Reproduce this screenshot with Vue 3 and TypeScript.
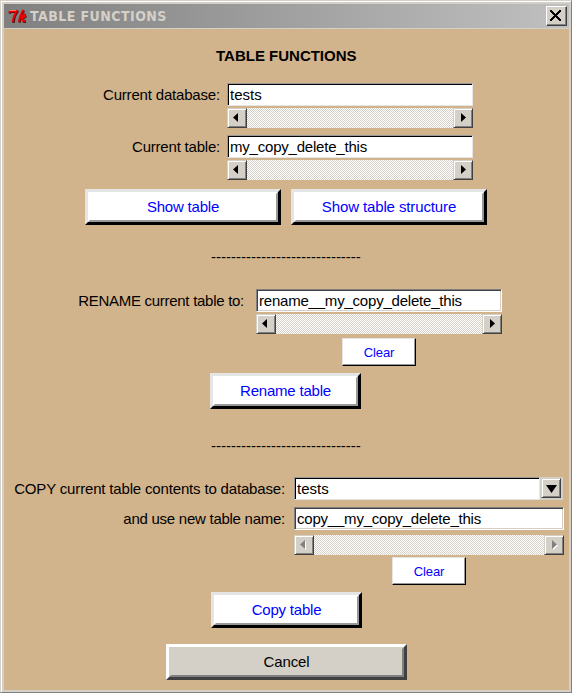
<script setup lang="ts">
import { ref } from 'vue'

const currentDatabase = ref('tests')
const currentTable = ref('my_copy_delete_this')
const renameTo = ref('rename__my_copy_delete_this')
const targetDatabase = ref('tests')
const copyName = ref('copy__my_copy_delete_this')
const dashes = '-'.repeat(30)
</script>

<template>
  <main class="window">
    <header class="titlebar">
      <svg class="logo" width="20" height="16" viewBox="0 0 20 16" fill="none" stroke-linejoin="round">
        <g stroke="#400c0c" stroke-width="2.4">
          <path d="M1.5 4.5L2.5 2.8H9.5Q6.5 6 5.4 13.8" />
          <path d="M16 1.5Q12.5 6 11.5 13.6M12.5 9.5L16.5 5.8L17.4 8L14.5 9.5L16 12.8H18" />
        </g>
        <g stroke="#f00000" stroke-width="2">
          <path d="M1 4L2 2.2H9Q6 5.5 4.6 13" />
          <path d="M15.5 1Q12 5.5 11 13M12 9L16 5.4L17 7.5L14 9L15.5 12.3H17.6" />
        </g>
        <path d="M1.5 1.5H8" stroke="#ff7070" stroke-width="1" />
      </svg>
      <span class="caption">TABLE FUNCTIONS</span>
      <button class="close" aria-label="Close">
        <svg width="11" height="11" viewBox="0 0 11 11" shape-rendering="crispEdges">
          <path d="M0 0h2v1h1v1h1v1h1v1h1v-1h1v-1h1v-1h1v-1h2v2h-1v1h-1v1h-1v1h-1v1h1v1h1v1h1v1h1v2h-2v-1h-1v-1h-1v-1h-1v-1h-1v1h-1v1h-1v1h-1v1h-2v-2h1v-1h1v-1h1v-1h1v-1h-1v-1h-1v-1h-1v-1h-1z" />
        </svg>
      </button>
    </header>

    <section class="body">
      <h1 class="heading">TABLE FUNCTIONS</h1>

      <div class="form current">
        <label class="label l-db">Current database:</label>
        <div class="field">
          <input v-model="currentDatabase" class="entry" />
          <div class="scroll">
            <i class="arrow"><svg width="5" height="9" viewBox="0 0 5 9"><path d="M5 0v9L0 4.5z" /></svg></i>
            <i class="arrow right"><svg width="5" height="9" viewBox="0 0 5 9"><path d="M0 0v9l5-4.5z" /></svg></i>
          </div>
        </div>
        <label class="label l-table">Current table:</label>
        <div class="field">
          <input v-model="currentTable" class="entry long" />
          <div class="scroll">
            <i class="arrow"><svg width="5" height="9" viewBox="0 0 5 9"><path d="M5 0v9L0 4.5z" /></svg></i>
            <i class="arrow right"><svg width="5" height="9" viewBox="0 0 5 9"><path d="M0 0v9l5-4.5z" /></svg></i>
          </div>
        </div>
      </div>

      <div class="pair">
        <button class="btn wide"><span>Show table</span></button>
        <button class="btn wide structure"><span>Show table structure</span></button>
      </div>

      <div class="rule first">{{ dashes }}</div>

      <div class="form rename">
        <label class="label l-rename">RENAME current table to:</label>
        <div class="field">
          <input v-model="renameTo" class="entry soft long" />
          <div class="scroll">
            <i class="arrow"><svg width="5" height="9" viewBox="0 0 5 9"><path d="M5 0v9L0 4.5z" /></svg></i>
            <i class="arrow right"><svg width="5" height="9" viewBox="0 0 5 9"><path d="M0 0v9l5-4.5z" /></svg></i>
          </div>
        </div>
      </div>
      <button class="clear clear-rename" @click="renameTo = ''"><span>Clear</span></button>
      <button class="btn rename-btn"><span>Rename table</span></button>

      <div class="rule second">{{ dashes }}</div>

      <div class="form copy">
        <label class="label l-copy">COPY current table contents to database:</label>
        <div class="combo">
          <input v-model="targetDatabase" class="entry" />
          <button class="drop" aria-label="Choose database">
            <svg width="11" height="8" viewBox="0 0 11 8"><path d="M0 0h11L5.5 8z" /></svg>
          </button>
        </div>
        <label class="label l-new">and use new table name:</label>
        <div class="field copy-field">
          <input v-model="copyName" class="entry soft long" />
          <div class="scroll">
            <i class="arrow"><svg width="6" height="10" viewBox="0 0 6 10"><path d="M6 1v9L1 5.5z" fill="#fff" /><path d="M5 0v9L0 4.5z" fill="#808080" /></svg></i>
            <i class="arrow right"><svg width="6" height="10" viewBox="0 0 6 10"><path d="M1 1v9l5-4.5z" fill="#fff" /><path d="M0 0v9l5-4.5z" fill="#808080" /></svg></i>
          </div>
        </div>
      </div>
      <button class="clear clear-copy" @click="copyName = ''"><span>Clear</span></button>
      <button class="btn copy-btn"><span>Copy table</span></button>
      <button class="btn cancel"><span>Cancel</span></button>
    </section>
  </main>
</template>

<style>
body {
  margin: 0;
  overflow: hidden;
}
</style>

<style scoped>
* {
  box-sizing: border-box;
}
.window {
  width: 572px;
  height: 693px;
  border: 1px solid;
  border-color: #d4d0c8 #808080 #808080 #d4d0c8;
  box-shadow: inset 1px 1px 0 #fff;
  padding: 3px 2px 2px 3px;
  background: #d4d0c8;
  font-family: 'Liberation Sans', Arial, sans-serif;
  font-size: 15px;
  color: #000;
}
.titlebar {
  height: 24px;
  display: flex;
  align-items: center;
  padding: 0 2px 0 4px;
  background: linear-gradient(to right, #808080, #c0c0c0);
}
.logo {
  flex: none;
  margin-top: 2px;
}
.caption {
  flex: 1;
  margin-left: 2px;
  font: bold 14px/24px 'DejaVu Sans Condensed', 'DejaVu Sans', sans-serif;
  font-stretch: condensed;
  letter-spacing: 0.45px;
  color: #d4d0c8;
  white-space: nowrap;
}
button {
  font-family: inherit;
  font-size: 15px;
  margin: 0;
  padding: 0;
  border-radius: 0;
}
.close {
  width: 21px;
  height: 20px;
  display: flex;
  align-items: flex-start;
  padding: 3px;
  background: #d4d0c8;
  border: 1px solid;
  border-color: #fff #404040 #404040 #fff;
  box-shadow: inset -1px -1px 0 #808080;
}
.body {
  height: 661px;
  margin-top: 1px;
  padding-top: 17px;
  background: #d2b48c;
  display: flex;
  flex-direction: column;
  align-items: flex-start;
}
.heading {
  margin: 0 0 17px 212px;
  font-size: 15px;
  line-height: 20px;
  white-space: nowrap;
}
.form {
  display: grid;
}
.current {
  grid-template-columns: 216px 246px;
  column-gap: 7px;
  row-gap: 7px;
}
.label {
  text-align: right;
  line-height: 23px;
  white-space: nowrap;
}
.l-db {
  letter-spacing: -0.18px;
}
.l-table {
  letter-spacing: -0.21px;
}
.l-rename {
  letter-spacing: -0.28px;
}
.l-copy {
  letter-spacing: -0.165px;
}
.l-new {
  letter-spacing: -0.26px;
}
.field {
  display: flex;
  flex-direction: column;
  gap: 2px;
}
.entry {
  display: block;
  width: 100%;
  height: 23px;
  margin: 0;
  padding: 0 2px;
  border: 1px solid;
  border-color: #999 #e5e5e5 #e5e5e5 #999;
  border-radius: 0;
  box-shadow: inset 1px 1px 0 #000;
  background: #fff;
  font: 15px 'Liberation Sans', Arial, sans-serif;
  color: #000;
  outline: none;
}
.entry.long {
  letter-spacing: -0.21px;
}
.entry.soft {
  border-color: #808080 #fff #fff #808080;
  box-shadow: inset 1px 1px 0 #404040, inset -1px -1px 0 #d4d0c8;
}
.scroll {
  height: 20px;
  display: flex;
  justify-content: space-between;
  background: repeating-conic-gradient(#d4d0c8 0 25%, #fff 0 50%) 0 0 / 2px 2px;
}
.arrow {
  width: 20px;
  height: 20px;
  display: flex;
  padding: 4px 0 0 5px;
  background: #d4d0c8;
  border: 1px solid;
  border-color: #d4d0c8 #404040 #404040 #d4d0c8;
  box-shadow: inset 1px 1px 0 #fff, inset -1px -1px 0 #808080;
}
.arrow.right {
  padding-left: 7px;
}
.pair {
  display: flex;
  gap: 10px;
  margin: 9px 0 0 81px;
}
.btn {
  width: 151px;
  height: 36px;
  flex: none;
  border: 3px solid;
  border-color: #e5e5e5 #000 #000 #e5e5e5;
  background: #fff;
  color: #00f;
  letter-spacing: -0.2px;
}
.btn span {
  display: block;
  height: 30px;
  border: 2px solid;
  border-color: #fff #999 #999 #fff;
  line-height: 26px;
}
.btn.wide {
  width: 196px;
}
.btn.structure {
  letter-spacing: -0.12px;
}
.rule {
  margin-left: 207px;
  line-height: 20px;
  white-space: nowrap;
}
.first {
  margin-top: 22px;
}
.rename {
  margin-top: 22px;
  grid-template-columns: 240px 246px;
  column-gap: 12px;
}
.clear {
  width: 74px;
  height: 28px;
  flex: none;
  border: 1px solid;
  border-color: #e5e5e5 #000 #000 #e5e5e5;
  box-shadow: inset -1px -1px 0 #999;
  background: #fff;
  color: #00f;
  font-size: 13px;
  letter-spacing: -0.1px;
}
.clear-rename {
  margin: 4px 0 0 338px;
}
.rename-btn {
  margin: 7px 0 0 206px;
}
.second {
  margin-top: 27px;
}
.copy {
  margin-top: 21px;
  grid-template-columns: 281px 270px;
  column-gap: 9px;
  row-gap: 7px;
}
.combo {
  width: 269px;
  display: flex;
  background: #d4d0c8;
}
.combo .entry {
  width: 246px;
  flex: none;
}
.drop {
  width: 20px;
  height: 20px;
  margin: 1px 0 0 1px;
  display: flex;
  padding: 6px 0 0 4px;
  background: #d4d0c8;
  border: 1px solid;
  border-color: #d4d0c8 #404040 #404040 #d4d0c8;
  box-shadow: inset 1px 1px 0 #fff, inset -1px -1px 0 #808080;
}
.copy-field {
  gap: 5px;
}
.clear-copy {
  margin: 2px 0 0 388px;
}
.copy-btn {
  margin: 7px 0 0 207px;
}
.cancel {
  width: 241px;
  margin: 16px 0 0 162px;
  border-color: #fff #404040 #404040 #fff;
  background: #d4d0c8;
  color: #000;
  letter-spacing: -0.1px;
}
.cancel span {
  border-color: #d4d0c8 #808080 #808080 #d4d0c8;
}
</style>
